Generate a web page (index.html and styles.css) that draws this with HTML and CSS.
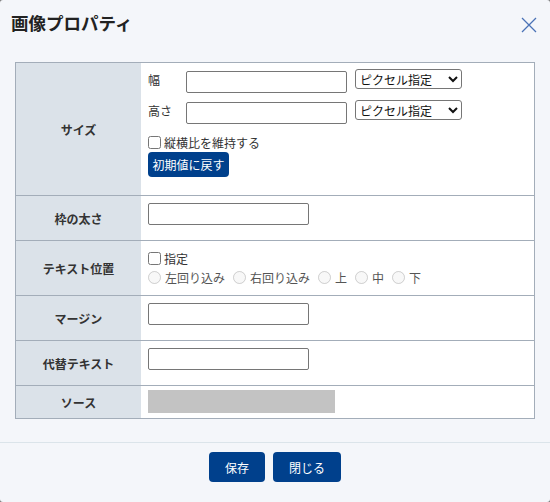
FILE: index.html
```html
<!DOCTYPE html>
<html lang="ja">
<head>
<meta charset="utf-8">
<title>画像プロパティ</title>
<link rel="stylesheet" href="styles.css">
</head>
<body>
<div class="dialog">
  <div class="header">
    <h1 class="title">画像プロパティ</h1>
    <svg class="close" width="16" height="16" viewBox="0 0 16 16" aria-label="閉じる">
      <path d="M1 1 L15 15 M15 1 L1 15" stroke="#4a72b6" stroke-width="1.3" fill="none"/>
    </svg>
  </div>
  <div class="props">
    <div class="row row-size">
      <div class="label">サイズ</div>
      <div class="value value-size">
        <div class="dim-line">
          <span class="dim-label">幅</span>
          <input class="text dim-input" type="text">
          <select class="unit"><option>ピクセル指定</option></select>
        </div>
        <div class="dim-line second">
          <span class="dim-label">高さ</span>
          <input class="text dim-input" type="text">
          <select class="unit"><option>ピクセル指定</option></select>
        </div>
        <label class="check-line"><input type="checkbox" class="chk">縦横比を維持する</label>
        <button class="reset">初期値に戻す</button>
      </div>
    </div>
    <div class="row">
      <div class="label">枠の太さ</div>
      <div class="value value-input"><input class="text wide" type="text"></div>
    </div>
    <div class="row">
      <div class="label">テキスト位置</div>
      <div class="value value-pos">
        <label class="check-line pos-line"><input type="checkbox" class="chk">指定</label>
        <div class="radios">
          <label class="radio"><input type="radio" name="pos" disabled>左回り込み</label>
          <label class="radio"><input type="radio" name="pos" disabled>右回り込み</label>
          <label class="radio"><input type="radio" name="pos" disabled>上</label>
          <label class="radio"><input type="radio" name="pos" disabled>中</label>
          <label class="radio"><input type="radio" name="pos" disabled>下</label>
        </div>
      </div>
    </div>
    <div class="row">
      <div class="label">マージン</div>
      <div class="value value-input"><input class="text wide" type="text"></div>
    </div>
    <div class="row">
      <div class="label">代替テキスト</div>
      <div class="value value-input"><input class="text wide" type="text"></div>
    </div>
    <div class="row">
      <div class="label">ソース</div>
      <div class="value value-source"><div class="source-box"></div></div>
    </div>
  </div>
  <div class="footer">
    <button class="btn btn-save">保存</button>
    <button class="btn btn-close">閉じる</button>
  </div>
</div>
</body>
</html>
```

FILE: styles.css
```css
html, body {
  margin: 0;
  padding: 0;
}
body {
  background: #7a7a7a;
  font-family: "Noto Sans CJK JP", "Noto Sans", sans-serif;
  font-size: 12px;
  color: #333;
}
.dialog {
  width: 550px;
  height: 502px;
  background: #f4f6fa;
  border-radius: 3px;
  box-sizing: border-box;
  display: flex;
  flex-direction: column;
}
.header {
  height: 62px;
  box-sizing: border-box;
  padding: 10px 13px 0 11px;
  display: flex;
  justify-content: space-between;
  align-items: flex-start;
}
.title {
  margin: 0;
  font-size: 17.5px;
  line-height: 26px;
  font-weight: bold;
  color: #222;
}
.close {
  margin-top: 7px;
}
.props {
  margin: 0 15px;
  border: 1px solid #a3adb9;
  background: #fff;
}
.row {
  display: grid;
  grid-template-columns: 125px 1fr;
  border-top: 1px solid #a3adb9;
}
.row:first-child {
  border-top: none;
}
.label {
  background: #dbe2e9;
  font-weight: bold;
  color: #333;
  display: flex;
  align-items: center;
  justify-content: center;
}
.value {
  padding: 0 7px;
}
.value-size {
  padding-top: 8px;
  padding-bottom: 18px;
}
.dim-line {
  display: flex;
  align-items: flex-start;
  height: 22px;
}
.dim-line.second {
  margin-top: 9px;
}
.dim-label {
  width: 38px;
  line-height: 18px;
}
.text {
  box-sizing: border-box;
  height: 22px;
  border: 1px solid #767676;
  border-radius: 2px;
  background: #fff;
  margin: 0;
  padding: 1px 3px;
  font: inherit;
}
.dim-input {
  width: 161px;
}
.wide {
  width: 161px;
  display: block;
}
.unit {
  box-sizing: border-box;
  width: 107px;
  height: 20px;
  margin: -2px 0 0 8px;
  font-family: inherit;
  font-size: 12px;
  color: #111;
  border: 1px solid #767676;
  border-radius: 3px;
  background: #fff;
}
.check-line {
  display: flex;
  align-items: center;
  height: 16px;
  margin-top: 10px;
  color: #333;
}
.chk {
  width: 13px;
  height: 13px;
  margin: 0 3px 0 0;
}
.reset {
  display: block;
  margin-top: 2px;
  height: 25px;
  width: 81px;
  padding: 0;
  border: none;
  border-radius: 4px;
  background: #00408c;
  color: #fff;
  font-family: inherit;
  font-size: 12px;
}
.value-input {
  padding-top: 7px;
  padding-bottom: 15px;
}
.value-pos {
  padding-top: 8px;
  padding-bottom: 8px;
}
.pos-line {
  margin-top: 0;
  height: 19px;
}
.radios {
  display: flex;
  gap: 8px;
  height: 19px;
  align-items: center;
}
.radio {
  display: flex;
  align-items: center;
  color: #555;
}
.radio input {
  width: 13px;
  height: 13px;
  margin: 0 4px 0 0;
}
.value-source {
  padding-top: 4px;
  padding-bottom: 5px;
}
.source-box {
  width: 187px;
  height: 23px;
  background: #c3c3c3;
}
.footer {
  margin-top: 23px;
  border-top: 1px solid #dbe4ea;
  padding-top: 9px;
  display: flex;
  justify-content: center;
  gap: 8px;
}
.btn {
  height: 30px;
  padding: 0;
  border: none;
  border-radius: 4px;
  background: #00408c;
  color: #fff;
  font-family: inherit;
  font-size: 12px;
}
.btn-save {
  width: 56px;
}
.btn-close {
  width: 68px;
}
```
